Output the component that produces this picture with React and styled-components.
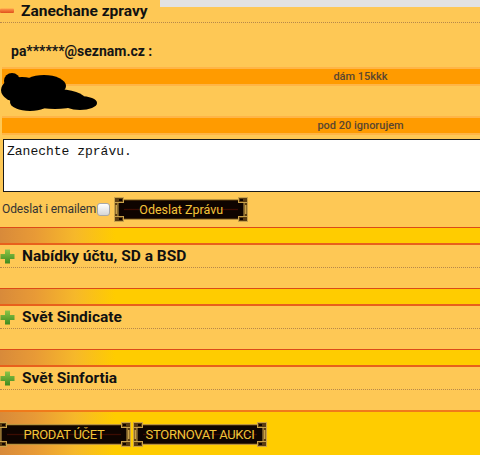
import React from "react";
import styled, { createGlobalStyle } from "styled-components";

const GlobalStyle = createGlobalStyle`
  html, body {
    margin: 0;
    padding: 0;
    background: #fec855;
    overflow: hidden;
  }
  body {
    font-family: Roboto, "Noto Sans", sans-serif;
    color: #111;
  }
`;

const Page = styled.div`
  position: relative;
  width: 480px;
  height: 455px;
  overflow: hidden;
  background: #fec855;
`;

const TopStrip = styled.div`
  position: absolute;
  top: 0;
  right: 0;
  width: 320px;
  height: 7px;
  background: #e2e2e2;
`;

const Band = styled.div`
  height: 15px;
  border-top: 1px solid #dc4a18;
  border-bottom: 2px solid #e8601c;
  background: linear-gradient(
    to right,
    #d88a3a 0px,
    #e89a36 35px,
    #f6b82a 75px,
    #ffcc00 115px
  );
`;

const Header = styled.div`
  height: 22px;
  display: flex;
  align-items: center;
  gap: 7px;
  border-bottom: 1px dotted #b7884a;
  font-size: 15.5px;
  font-weight: 700;
  color: #111;
  white-space: nowrap;
`;

const SectionBody = styled.div`
  min-height: 20px;
`;

const MessageList = styled.div`
  padding-top: 14px;
`;

const Author = styled.div`
  position: relative;
  height: 30px;
  display: flex;
  align-items: center;
  padding: 0 11px 2px;
  box-sizing: border-box;
  font-size: 14px;
  font-weight: 700;
  color: #151515;
`;

const Bar = styled.div`
  margin-left: 2px;
  height: 15px;
  border-top: 2px solid #ffb546;
  border-bottom: 2px solid #ffb546;
  background: #ff9b00;
  display: grid;
  grid-template-columns: 1fr 1fr;
  align-items: center;
  font-size: 11px;
  font-weight: 500;
  color: #5a4630;
`;

const BarText = styled.span`
  grid-column: 2;
  text-align: center;
  line-height: 15px;
`;

const Scribble = styled.svg`
  position: absolute;
  left: 0;
  top: -14px;
`;

const Composer = styled.div`
  padding: 4px 0 5px;
`;

const MessageInput = styled.textarea`
  display: block;
  margin-left: 3px;
  width: 530px;
  height: 53px;
  box-sizing: border-box;
  border: 1px solid #1a1a1a;
  background: #fff;
  padding: 4px 3px;
  resize: none;
  font-family: "Liberation Mono", "DejaVu Sans Mono", monospace;
  font-size: 13px;
  line-height: 15px;
  color: #111;
  outline: none;
`;

const SendRow = styled.div`
  display: flex;
  align-items: center;
  height: 26px;
  margin-top: 4px;
  padding-left: 2px;
`;

const Label = styled.label`
  font-size: 12px;
  color: #333;
  letter-spacing: -0.1px;
`;

const Check = styled.input`
  appearance: none;
  width: 13px;
  height: 13px;
  margin: 0 4px 0 1px;
  border: 1px solid #a8a8a8;
  border-radius: 3px;
  background: linear-gradient(#ffffff, #d6d6d6);
  box-sizing: border-box;
`;

const FrameButton = styled.button`
  display: flex;
  align-items: stretch;
  width: 134px;
  height: 25px;
  padding: 0;
  margin: 0;
  border: none;
  background: transparent;
  cursor: pointer;
  flex-shrink: 0;
`;

const ButtonFace = styled.span`
  flex: 1;
  margin: 2px 0;
  display: flex;
  align-items: center;
  justify-content: center;
  border-top: 1px solid #b8923e;
  border-bottom: 1px solid #b8923e;
  box-shadow: inset 0 1px 0 #3a2408, inset 0 -1px 0 #3a2408;
  background: linear-gradient(
    to bottom,
    #0e0400 0%,
    #0e0400 44%,
    #3c0c02 50%,
    #0e0400 56%,
    #0e0400 100%
  );
  font-family: Roboto, "Noto Sans", sans-serif;
  font-size: ${(p) => (p.$caps ? "13px" : "12.5px")};
  color: #f2c43a;
  letter-spacing: ${(p) => (p.$caps ? "-0.3px" : "0")};
  white-space: nowrap;
`;

const Footer = styled.div`
  border-top: 2px solid #f07a1a;
  min-height: 50px;
  padding-top: 10px;
  display: flex;
  background: linear-gradient(
    to right,
    #d88a3a 0px,
    #e89a36 35px,
    #f6b82a 75px,
    #ffcc00 115px
  );
`;

const FooterButtons = styled.div`
  display: flex;
  gap: 2px;
  margin-left: -3px;
`;

function Ornament({ flip }) {
  return (
    <svg
      width="10"
      height="25"
      viewBox="0 0 10 25"
      style={flip ? { transform: "scaleX(-1)" } : undefined}
    >
      <rect x="3" y="2" width="7" height="21" fill="#0e0400" />
      <rect x="0.5" y="0.5" width="3.5" height="24" fill="#5a3c12" stroke="#c9a24a" strokeWidth="1" />
      <rect x="0.5" y="0.5" width="9" height="5" fill="#5a3c12" stroke="#c9a24a" strokeWidth="1" />
      <rect x="5" y="2" width="3" height="2" fill="#0e0400" />
      <rect x="0.5" y="19.5" width="9" height="5" fill="#5a3c12" stroke="#c9a24a" strokeWidth="1" />
      <rect x="5" y="21" width="3" height="2" fill="#0e0400" />
      <rect x="1.5" y="8" width="1.5" height="9" fill="#c9a24a" />
    </svg>
  );
}

function GoldButton({ children, caps }) {
  return (
    <FrameButton type="button">
      <Ornament />
      <ButtonFace $caps={caps}>{children}</ButtonFace>
      <Ornament flip />
    </FrameButton>
  );
}

function MinusIcon() {
  return (
    <svg width="14" height="14" viewBox="0 0 14 14">
      <defs>
        <linearGradient id="mg" x1="0" y1="0" x2="0" y2="1">
          <stop offset="0" stopColor="#ff9a4a" />
          <stop offset="1" stopColor="#e0501c" />
        </linearGradient>
      </defs>
      <rect x="0" y="4.5" width="14" height="4.5" rx="1" fill="url(#mg)" />
    </svg>
  );
}

function PlusIcon() {
  return (
    <svg width="15" height="15" viewBox="0 0 15 15">
      <defs>
        <linearGradient id="pg" x1="0" y1="0" x2="0" y2="1">
          <stop offset="0" stopColor="#8cc447" />
          <stop offset="1" stopColor="#3f8a1e" />
        </linearGradient>
      </defs>
      <path
        d="M5 0.5h5v4.5h4.5v5h-4.5v4.5h-5v-4.5h-4.5v-5h4.5z"
        fill="url(#pg)"
      />
    </svg>
  );
}

function Section({ title, open, band = true, children }) {
  return (
    <section>
      {band && <Band />}
      <Header>
        {open ? <MinusIcon /> : <PlusIcon />}
        {title}
      </Header>
      <SectionBody>{children}</SectionBody>
    </section>
  );
}

const messages = [
  { author: "pa******@seznam.cz :", text: "dám 15kkk" },
  { author: null, text: "pod 20 ignorujem" },
];

export default function App() {
  return (
    <>
      <GlobalStyle />
      <Page>
        <Section title="Zanechane zpravy" open band={false}>
          <MessageList>
            {messages.map((m, i) => (
              <React.Fragment key={i}>
                <Author>
                  {m.author}
                  {!m.author && (
                    <Scribble width="100" height="42" viewBox="0 0 100 42">
                      <g fill="#000">
                        <circle cx="12" cy="9" r="8" />
                        <ellipse cx="22" cy="18" rx="21" ry="13" />
                        <ellipse cx="44" cy="14" rx="22" ry="11" />
                        <ellipse cx="55" cy="27" rx="30" ry="10" />
                        <ellipse cx="80" cy="31" rx="17" ry="7" />
                        <ellipse cx="30" cy="30" rx="20" ry="9" />
                      </g>
                    </Scribble>
                  )}
                </Author>
                <Bar>
                  <BarText>{m.text}</BarText>
                </Bar>
              </React.Fragment>
            ))}
          </MessageList>
          <Composer>
            <MessageInput defaultValue="Zanechte zprávu." />
            <SendRow>
              <Label htmlFor="mail">Odeslat i emailem</Label>
              <Check id="mail" type="checkbox" />
              <GoldButton>Odeslat Zprávu</GoldButton>
            </SendRow>
          </Composer>
        </Section>
        <Section title="Nabídky účtu, SD a BSD" />
        <Section title="Svět Sindicate" />
        <Section title="Svět Sinfortia" />
        <Footer>
          <FooterButtons>
            <GoldButton caps>PRODAT ÚČET</GoldButton>
            <GoldButton caps>STORNOVAT AUKCI</GoldButton>
          </FooterButtons>
        </Footer>
        <TopStrip />
      </Page>
    </>
  );
}
